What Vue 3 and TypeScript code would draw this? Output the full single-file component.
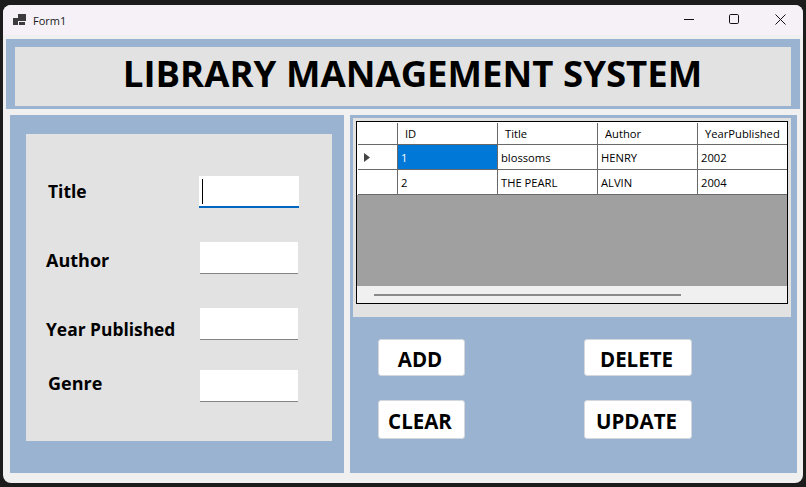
<script setup lang="ts">
// Form1 library window, all content comes from these lists
const fields = [
  { key: 'title', label: 'Title' },
  { key: 'author', label: 'Author' },
  { key: 'year', label: 'Year Published' },
  { key: 'genre', label: 'Genre' },
]

const columns = ['ID', 'Title', 'Author', 'YearPublished']

const rows = [
  { id: '1', title: 'blossoms', author: 'HENRY', year: '2002' },
  { id: '2', title: 'THE PEARL', author: 'ALVIN', year: '2004' },
]
</script>

<template>
  <div class="desktop">
    <div class="window">
      <div class="titlebar">
        <svg class="app-icon" width="13" height="12" viewBox="0 0 13 12">
          <rect x="0" y="4" width="5" height="7" fill="#3c3c3c" />
          <rect x="5" y="0" width="8" height="7" fill="#3c3c3c" />
          <rect x="6" y="8" width="6" height="3" fill="#3c3c3c" />
        </svg>
        <span class="form-name">Form1</span>
        <div class="controls">
          <svg class="ctl ctl-min" width="10" height="10" viewBox="0 0 10 10">
            <path d="M0 5.5H10" stroke="#111" fill="none" />
          </svg>
          <svg class="ctl ctl-max" width="10" height="10" viewBox="0 0 10 10">
            <rect x="0.5" y="0.5" width="9" height="9" rx="1.2" stroke="#111" fill="none" />
          </svg>
          <svg class="ctl ctl-close" width="11" height="11" viewBox="0 0 11 11">
            <path d="M0.5 0.5L10.5 10.5M10.5 0.5L0.5 10.5" stroke="#111" fill="none" />
          </svg>
        </div>
      </div>

      <div class="client">
        <header class="banner">
          <h1 class="banner-text">LIBRARY MANAGEMENT SYSTEM</h1>
        </header>

        <div class="panels">
          <section class="panel panel-left">
            <div class="form-card">
              <div v-for="f in fields" :key="f.key" class="field" :class="'field-' + f.key">
                <label class="field-label">{{ f.label }}</label>
                <div class="input" :class="{ focused: f.key === 'title' }">
                  <span v-if="f.key === 'title'" class="caret"></span>
                </div>
              </div>
            </div>
          </section>

          <section class="panel panel-right">
            <div class="grid-card">
              <div class="grid">
                <div class="grid-rows">
                  <div class="row row-head">
                    <div class="cell cell-rowhead"></div>
                    <div v-for="c in columns" :key="c" class="cell cell-head">{{ c }}</div>
                  </div>
                  <div v-for="(r, i) in rows" :key="r.id" class="row">
                    <div class="cell cell-rowhead">
                      <svg v-if="i === 0" width="6" height="9" viewBox="0 0 6 9">
                        <path d="M0 0L6 4.5L0 9Z" fill="#444" />
                      </svg>
                    </div>
                    <div class="cell" :class="{ selected: i === 0 }">{{ r.id }}</div>
                    <div class="cell">{{ r.title }}</div>
                    <div class="cell">{{ r.author }}</div>
                    <div class="cell">{{ r.year }}</div>
                  </div>
                </div>
                <div class="grid-empty"></div>
                <div class="scrollbar"><div class="thumb"></div></div>
              </div>
            </div>

            <div class="actions">
              <button class="btn btn-short">ADD</button>
              <button class="btn btn-long">DELETE</button>
              <button class="btn btn-short btn-tall">CLEAR</button>
              <button class="btn btn-long btn-tall">UPDATE</button>
            </div>
          </section>
        </div>
      </div>
    </div>
  </div>
</template>

<style>
html, body { margin: 0; background: #1c1c1c; }
</style>

<style scoped>
.desktop {
  width: 806px;
  height: 487px;
  box-sizing: border-box;
  padding: 5px 3px 4px 3px;
  background: #1c1c1c;
  overflow: hidden;
  font-family: "Open Sans", "Noto Sans", sans-serif;
  color: #000;
}
.window {
  height: 100%;
  background: #f0f0f0;
  border-radius: 8px 8px 8px 8px;
  overflow: hidden;
  display: flex;
  flex-direction: column;
}

/* title bar */
.titlebar {
  height: 30px;
  flex: none;
  background: #f5f1f7;
  display: flex;
  align-items: center;
  padding-left: 10px;
}
.app-icon { flex: none; }
.form-name {
  margin-left: 7px;
  font-size: 11px;
  color: #1a1a1a;
}
.controls { margin-left: auto; margin-bottom: 2px; display: flex; align-items: center; }
.ctl-min { margin-right: 35px; }
.ctl-max { margin-right: 36px; }
.ctl-close { margin-right: 17px; }

/* client area */
.client { flex: 1; padding: 4px 3px 0 3px; }
.banner {
  height: 70px;
  box-sizing: border-box;
  background: #9ab3d0;
  padding: 8px 9px 3px 9px;
  display: flex;
}
.banner-text {
  flex: 1;
  margin: 0;
  background: #e2e2e2;
  text-align: center;
  font-size: 36.6px;
  font-weight: 700;
  line-height: 52px;
  padding-left: 19px;
}
.panels {
  display: flex;
  gap: 6px;
  margin-top: 6px;
  padding-left: 4px;
}
.panel {
  height: 358px;
  background: #9ab3d0;
  box-sizing: border-box;
}

/* left form */
.panel-left { width: 334px; padding: 19px 12px 32px 16px; }
.form-card {
  height: 100%;
  box-sizing: border-box;
  background: #e2e2e2;
  padding-top: 42px;
}
.field {
  display: flex;
  height: 32px;
  padding-left: 174px;
  position: relative;
}
.field-author { margin-top: 34px; }
.field-year { margin-top: 34px; }
.field-genre { margin-top: 30px; }
.field-label {
  position: absolute;
  font-size: 17.4px;
  font-weight: 700;
  line-height: 24px;
  white-space: nowrap;
}
.field-title .field-label { left: 22px; top: 3px; }
.field-author .field-label { left: 20px; top: 6px; font-size: 18px; }
.field-year .field-label { left: 20px; top: 9px; }
.field-genre .field-label { left: 22px; top: 1px; font-size: 18px; }
.input {
  width: 98px;
  height: 32px;
  box-sizing: border-box;
  background: #fff;
  border-bottom: 1px solid #848484;
  position: relative;
}
.input.focused { border-bottom: 2px solid #0067c0; width: 100px; margin-left: -1px; }
.caret {
  position: absolute;
  left: 3px;
  top: 3px;
  width: 1px;
  height: 25px;
  background: #000;
}

/* data grid */
.panel-right { width: 447px; padding: 3px 6px 0 3px; }
.grid-card {
  height: 199px;
  box-sizing: border-box;
  background: #e2e2e2;
  padding: 3px;
}
.grid {
  height: 183px;
  width: 432px;
  box-sizing: border-box;
  border: 1px solid #000;
  display: flex;
  flex-direction: column;
  background: #f0f0f0;
}
.grid-rows { background: #fff; padding: 1px 0 0 1px; }
.row {
  display: grid;
  grid-template-columns: 40px 100px 100px 100px 89px;
  height: 25px;
  box-sizing: border-box;
  border-bottom: 1px solid #696969;
  font-size: 11.2px;
}
.row-head { height: 22px; }
.row:last-child { border-bottom: 1px solid #696969; }
.cell {
  border-right: 1px solid #696969;
  box-sizing: border-box;
  padding-left: 3px;
  line-height: 25px;
  white-space: nowrap;
  overflow: hidden;
}
.cell:last-child { border-right: none; }
.cell-head { padding-left: 7px; line-height: 22px; }
.cell-rowhead { display: flex; align-items: center; padding-left: 6px; }
.selected { background: #0078d7; color: #fff; }
.grid-empty { flex: 1; background: #a0a0a0; }
.scrollbar {
  height: 17px;
  flex: none;
  padding: 8px 0 0 17px;
  box-sizing: border-box;
}
.thumb { width: 307px; height: 2px; background: #8a8a8a; }

/* buttons */
.actions {
  display: grid;
  grid-template-columns: 87px 108px;
  column-gap: 119px;
  row-gap: 24px;
  padding: 22px 0 0 25px;
  align-items: start;
}
.btn {
  height: 37px;
  background: #fff;
  border: 1px solid #d4d7dc;
  border-radius: 3px;
  font-family: inherit;
  font-size: 20.5px;
  font-weight: 700;
  color: #000;
  padding: 3px 3px 0 0;
}
.btn-tall { height: 39px; padding-top: 2px; }
</style>
